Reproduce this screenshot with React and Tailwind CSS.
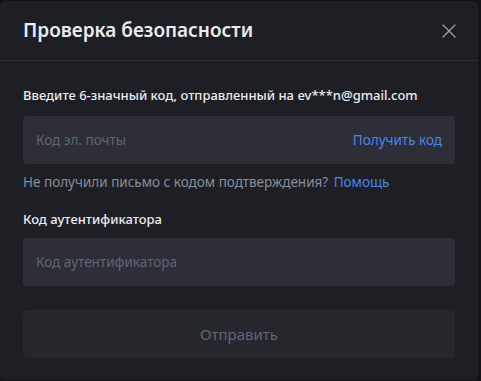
import { X } from 'lucide-react';

export default function App() {
  return (
    <div className="h-[381px] w-[481px] bg-[#131417] pr-[3px] pt-px font-['Noto_Sans',sans-serif]">
      <div className="flex h-[379px] flex-col rounded-[6px] bg-[#1e1f24]">
        <div className="flex h-[60px] items-center justify-between border-b border-[#2c2e34] pl-[23px] pr-[17px]">
          <h2 className="text-[19px] font-semibold text-[#eaecef]">Проверка безопасности</h2>
          <X size={24} strokeWidth={1.3} className="text-[#9aa0aa]" />
        </div>
        <div className="flex flex-col px-[23px] pt-[24px]">
          <label className="text-[13px] font-medium leading-[20px] text-[#eaecef]">
            Введите 6-значный код, отправленный на ev***n@gmail.com
          </label>
          <div className="mt-[11px] flex h-[48px] items-center justify-between rounded-[4px] bg-[#2d2e37] px-[13px]">
            <span className="text-[13.5px] text-[#5e6673]">Код эл. почты</span>
            <span className="text-[13.5px] text-[#4a86ef]">Получить код</span>
          </div>
          <div className="mt-[8px] text-[13.5px] leading-[20px] text-[#848e9c]">
            Не получили письмо с кодом подтверждения? <span className="ml-0.5 text-[#4a86ef]">Помощь</span>
          </div>
          <label className="mt-[17px] text-[13px] font-medium leading-[20px] text-[#eaecef]">Код аутентификатора</label>
          <div className="mt-[9px] flex h-[48px] items-center rounded-[4px] bg-[#2d2e37] px-[13px]">
            <span className="text-[13.5px] text-[#5e6673]">Код аутентификатора</span>
          </div>
          <button className="mt-[24px] flex h-[48px] items-center justify-center rounded-[4px] bg-[#26272c] text-[15px] text-[#5e6673]">
            Отправить
          </button>
        </div>
      </div>
    </div>
  );
}
